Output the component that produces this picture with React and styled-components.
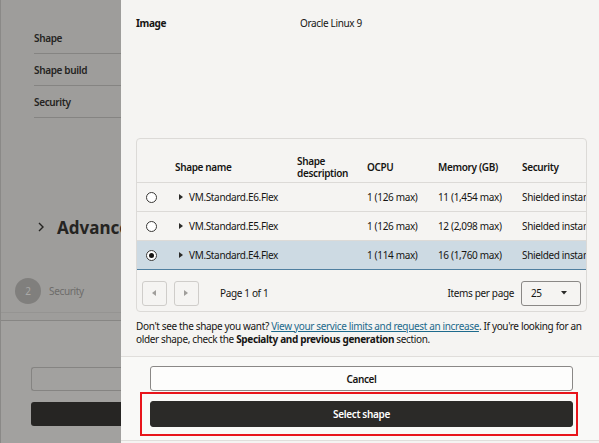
import React from 'react'
import styled, { createGlobalStyle } from 'styled-components'

const GlobalStyle = createGlobalStyle`
  html, body {
    margin: 0;
    padding: 0;
    background: #f5f4f2;
  }
  * { box-sizing: border-box; }
  body {
    font-family: "Noto Sans", "Open Sans", sans-serif;
    color: #161513;
    letter-spacing: -0.35px;
  }
`

const Page = styled.div`
  display: flex;
  width: 599px;
  height: 443px;
  overflow: hidden;
`

const Backdrop = styled.div`
  width: 121px;
  flex-shrink: 0;
  background: #9e9d9b;
  border-left: 1px solid #8a8987;
  display: flex;
  flex-direction: column;
  overflow: hidden;
  color: #252422;
`

const SummaryList = styled.div`
  padding: 22px 0 0 33px;
`

const SummaryRow = styled.div`
  height: 32px;
  display: flex;
  align-items: center;
  border-bottom: 1px solid #858482;
  font-size: 10px;
  font-weight: 600;
  white-space: nowrap;
`

const SectionTitle = styled.div`
  display: flex;
  align-items: center;
  margin-top: 97px;
  padding-left: 37px;
  height: 24px;
  white-space: nowrap;
  font-size: 17px;
  font-weight: 700;
  letter-spacing: 0;
  svg { margin-right: 13px; flex-shrink: 0; }
`

const Step = styled.div`
  display: flex;
  align-items: center;
  margin-top: 39px;
  padding-left: 14px;
  font-size: 10px;
  color: #6d6c6a;
  white-space: nowrap;
`

const StepNum = styled.span`
  width: 26px;
  height: 26px;
  border-radius: 50%;
  background: #807f7d;
  color: #aaa9a7;
  display: flex;
  align-items: center;
  justify-content: center;
  margin-right: 8px;
  font-size: 10px;
`

const BackdropFooter = styled.div`
  margin-top: 8px;
  border-top: 1px solid #959492;
  flex: 1;
  display: flex;
  flex-direction: column;
`

const BackdropInner = styled.div`
  margin-top: 7px;
  border-top: 1px solid #878684;
  flex: 1;
  background: #a2a19f;
  padding: 46px 0 0 30px;
`

const GhostInput = styled.div`
  height: 24px;
  margin-right: -6px;
  border: 1px solid #858482;
  border-right: none;
  border-radius: 3px 0 0 3px;
`

const GhostButton = styled.div`
  height: 24px;
  margin-top: 11px;
  background: #262523;
  border-radius: 3px 0 0 3px;
`

const Drawer = styled.div`
  flex: 1;
  min-width: 0;
  display: flex;
  flex-direction: column;
  background: #f5f4f2;
`

const Body = styled.div`
  flex: 1;
  min-width: 0;
  padding: 17px 12px 0 15px;
`

const InfoRow = styled.div`
  display: grid;
  grid-template-columns: 164px 1fr;
  font-size: 10px;
  line-height: 12px;
`

const InfoLabel = styled.div`
  font-weight: 700;
`

const Card = styled.div`
  margin-top: 109px;
  border: 1px solid #dcdad7;
  border-radius: 4px;
  overflow: hidden;
`

const TableWrap = styled.div`
  overflow: hidden;
`

const Table = styled.table`
  table-layout: fixed;
  width: 483px;
  border-collapse: collapse;
  font-size: 10px;
  line-height: 12px;
`

const Th = styled.th`
  text-align: left;
  font-weight: 600;
  height: 43px;
  padding: 13px 0 0 ${p => p.$pad ?? 10}px;
  vertical-align: middle;
  border-bottom: 1px solid #dcdad7;
  white-space: nowrap;
`

const Tr = styled.tr`
  background: ${p => (p.$selected ? '#cddae3' : 'transparent')};
  td {
    border-bottom: 1px solid ${p => (p.$selected ? '#4f7fa0' : '#dcdad7')};
    border-top: ${p => (p.$selected ? '1px solid #4f7fa0' : 'none')};
  }
`

const Td = styled.td`
  height: 29px;
  padding: 0 0 0 10px;
  white-space: nowrap;
  overflow: hidden;
  vertical-align: middle;
`

const RadioCell = styled.td`
  height: 29px;
  text-align: center;
  vertical-align: middle;
  padding: 0;
`

const Radio = styled.span`
  display: inline-block;
  width: 11px;
  height: 11px;
  border-radius: 50%;
  border: 1px solid #3a3937;
  background: #fff;
  position: relative;
  vertical-align: middle;
  &::after {
    content: '';
    display: ${p => (p.$checked ? 'block' : 'none')};
    position: absolute;
    left: 2px;
    top: 2px;
    width: 5px;
    height: 5px;
    border-radius: 50%;
    background: #161513;
  }
`

const Name = styled.span`
  display: inline-flex;
  align-items: center;
  margin-left: 4px;
  svg { margin-right: 6px; }
`

const Pager = styled.div`
  display: flex;
  align-items: center;
  padding: 11px 5px 5px 5px;
  font-size: 10px;
`

const PageBtn = styled.button`
  width: 25px;
  height: 25px;
  margin-right: 7px;
  border: 1px solid #cfcdca;
  border-radius: 3px;
  background: transparent;
  display: flex;
  align-items: center;
  justify-content: center;
  padding: 0;
`

const PageText = styled.span`
  margin-left: 14px;
  flex: 1;
`

const Select = styled.div`
  width: 60px;
  height: 25px;
  margin-left: 7px;
  border: 1px solid #8a8886;
  border-radius: 3px;
  display: flex;
  align-items: center;
  justify-content: space-between;
  padding: 0 13px 0 9px;
`

const Note = styled.p`
  margin: 8px 0 0;
  font-size: 10px;
  line-height: 13px;
  a {
    color: #1d6a8c;
    text-decoration: underline;
  }
  b { font-weight: 700; }
`

const Footer = styled.div`
  height: 85px;
  margin-bottom: 2px;
  border-top: 1px solid #e0dedb;
  border-bottom: 1px solid #e0dedb;
  background: #f9f9f7;
  padding: 9px 26px 0 29px;
  display: flex;
  flex-direction: column;
`

const Button = styled.button`
  height: ${p => (p.$primary ? 26 : 25)}px;
  width: 100%;
  border-radius: 3px;
  border: 1px solid ${p => (p.$primary ? '#2b2a28' : '#8a8886')};
  background: ${p => (p.$primary ? '#2b2a28' : '#fdfdfc')};
  color: ${p => (p.$primary ? '#fff' : '#161513')};
  font-family: "Noto Sans", "Open Sans", sans-serif;
  font-size: 10px;
  font-weight: 600;
  letter-spacing: -0.35px;
  padding: 0;
`

const Highlight = styled.div`
  margin: 1px -5px 0 -10px;
  padding: 7px 3px 7px 8px;
  border: 2px solid #e8141a;
`

const Tri = ({ dir = 'right', color = '#2a2a28', size = 6 }) => {
  const pts = {
    right: '0,0 4,3 0,6',
    left: '4,0 0,3 4,6',
    down: '0,0 6,0 3,3.5',
  }[dir]
  const vb = dir === 'down' ? '0 0 6 4' : '0 0 4 6'
  const w = dir === 'down' ? size : size * 0.67
  const h = dir === 'down' ? size * 0.67 : size
  return (
    <svg width={w} height={h} viewBox={vb}>
      <polygon points={pts} fill={color} />
    </svg>
  )
}

const shapes = [
  { name: 'VM.Standard.E6.Flex', ocpu: '1 (126 max)', mem: '11 (1,454 max)' },
  { name: 'VM.Standard.E5.Flex', ocpu: '1 (126 max)', mem: '12 (2,098 max)' },
  { name: 'VM.Standard.E4.Flex', ocpu: '1 (114 max)', mem: '16 (1,760 max)', selected: true },
]

export default function App() {
  return (
    <>
      <GlobalStyle />
      <Page>
        <Backdrop>
          <SummaryList>
            <SummaryRow>Shape</SummaryRow>
            <SummaryRow>Shape build</SummaryRow>
            <SummaryRow>Security</SummaryRow>
          </SummaryList>
          <SectionTitle>
            <svg width="6" height="10" viewBox="0 0 6 10">
              <polyline points="1,1 5,5 1,9" fill="none" stroke="#252422" strokeWidth="1.4" />
            </svg>
            Advanced options
          </SectionTitle>
          <Step>
            <StepNum>2</StepNum>
            Security
          </Step>
          <BackdropFooter>
            <BackdropInner>
              <GhostInput />
              <GhostButton />
            </BackdropInner>
          </BackdropFooter>
        </Backdrop>
        <Drawer>
          <Body>
            <InfoRow>
              <InfoLabel>Image</InfoLabel>
              <div>Oracle Linux 9</div>
            </InfoRow>
            <Card>
              <TableWrap>
                <Table>
                  <colgroup>
                    <col style={{ width: 28 }} />
                    <col style={{ width: 122 }} />
                    <col style={{ width: 70 }} />
                    <col style={{ width: 71 }} />
                    <col style={{ width: 84 }} />
                    <col style={{ width: 108 }} />
                  </colgroup>
                  <thead>
                    <tr>
                      <Th $pad={0} />
                      <Th>Shape name</Th>
                      <Th>Shape<br />description</Th>
                      <Th>OCPU</Th>
                      <Th>Memory (GB)</Th>
                      <Th>Security</Th>
                    </tr>
                  </thead>
                  <tbody>
                    {shapes.map(s => (
                      <Tr key={s.name} $selected={s.selected}>
                        <RadioCell><Radio $checked={s.selected} /></RadioCell>
                        <Td>
                          <Name><Tri />{s.name}</Name>
                        </Td>
                        <Td />
                        <Td>{s.ocpu}</Td>
                        <Td>{s.mem}</Td>
                        <Td>Shielded instance</Td>
                      </Tr>
                    ))}
                  </tbody>
                </Table>
              </TableWrap>
              <Pager>
                <PageBtn><Tri dir="left" color="#a09e9b" /></PageBtn>
                <PageBtn><Tri dir="right" color="#a09e9b" /></PageBtn>
                <PageText>Page 1 of 1</PageText>
                <span>Items per page</span>
                <Select>
                  <span>25</span>
                  <Tri dir="down" color="#2a2a28" />
                </Select>
              </Pager>
            </Card>
            <Note>
              Don't see the shape you want? <a href="#">View your service limits and request an increase</a>. If you're looking for an older shape, check the <b>Specialty and previous generation</b> section.
            </Note>
          </Body>
          <Footer>
            <Button>Cancel</Button>
            <Highlight>
              <Button $primary>Select shape</Button>
            </Highlight>
          </Footer>
        </Drawer>
      </Page>
    </>
  )
}
